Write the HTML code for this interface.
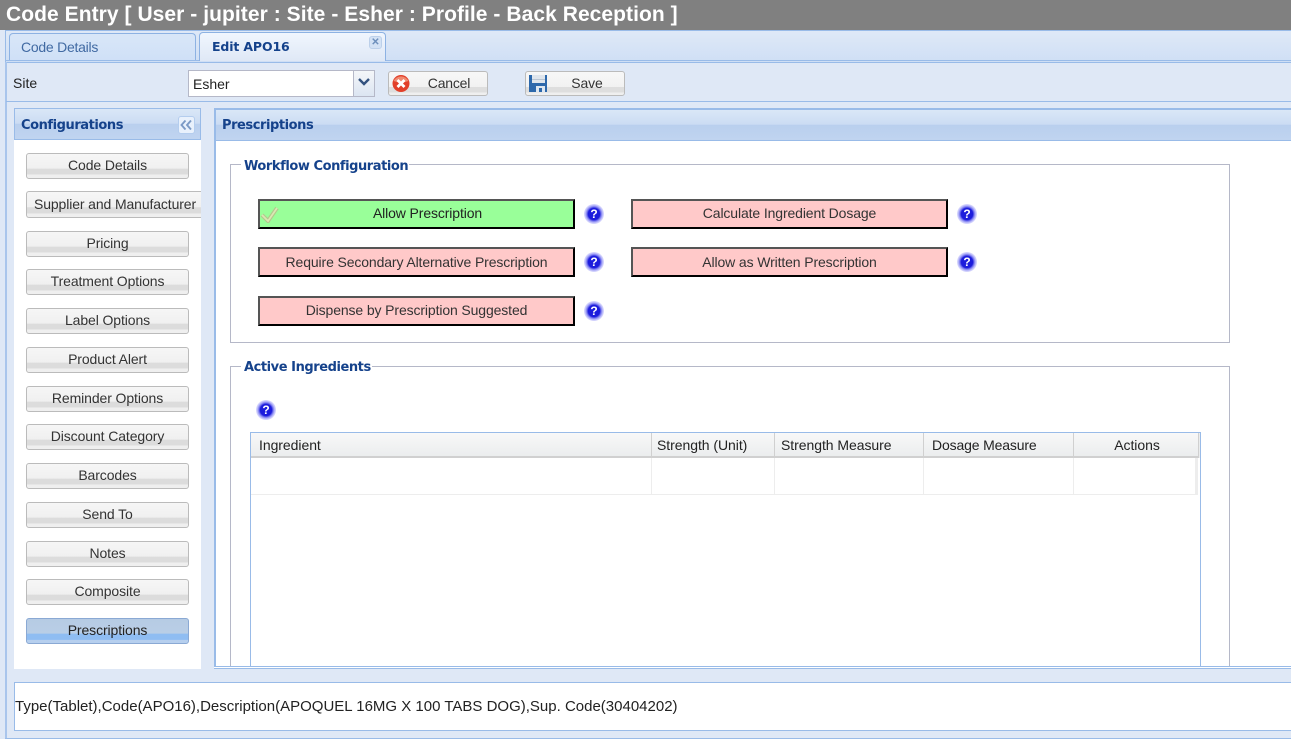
<!DOCTYPE html>
<html><head><meta charset="utf-8"><style>
html,body{margin:0;padding:0;width:1291px;height:739px;overflow:hidden;background:#dfe8f6;font-family:"Liberation Sans",sans-serif;font-size:14px;color:#333}
.a{position:absolute;box-sizing:border-box}
.b{font-family:"DejaVu Sans",sans-serif;font-weight:bold;color:#15428b;white-space:nowrap}
.h{font-size:13px;line-height:16px;letter-spacing:-.44px}
.nav{position:absolute;left:26px;width:163px;height:26px;box-sizing:border-box;border:1px solid #bbb;border-radius:3px;background:linear-gradient(#f6f6f6 0,#f0f0f0 60%,#dcdcdc 62%,#dcdcdc 85%,#efefef 86%);text-align:center;line-height:23px;color:#333;white-space:nowrap;letter-spacing:-.1px}
.tog{position:absolute;height:30px;box-sizing:border-box;width:317px;border:2px solid;border-color:#555 #000 #000 #555;text-align:center;line-height:25px;background:#ffc9c9;color:#333;letter-spacing:-.12px}
.q{position:absolute;width:20px;height:20px;border-radius:50%;background:radial-gradient(circle closest-side,#1c1cdc 0,#1c1cdc 58%,#7a7af0 72%,#c0c0fa 88%,#dcdcfd 100%);color:#fff;font:bold 12px/20px "Liberation Sans",sans-serif;text-align:center}
.bt{position:absolute;height:25px;box-sizing:border-box;border:1px solid #bbb;border-radius:3px;background:linear-gradient(#f7f7f7 0,#f2f2f2 64%,#dedede 66%,#dedede 88%,#efefef 90%);line-height:23px;text-align:center}
.th{position:absolute;top:433px;height:25px;box-sizing:border-box;line-height:24px;background:linear-gradient(#f8f8f8,#ebedee);border-right:1px solid #d0d0d0;border-bottom:2px solid #d0d0d0;padding-left:8px;color:#222;white-space:nowrap;letter-spacing:-.05px}
.td{position:absolute;top:458px;height:37px;box-sizing:border-box;border-right:1px solid #ededed;border-bottom:1px solid #ededed}
</style></head><body>
<div class="a" style="left:0;top:0;width:1291px;height:30px;background:#808080;color:#fff;font:bold 21px/30px 'Liberation Sans',sans-serif;padding-left:6px;white-space:nowrap;letter-spacing:.06px">Code Entry [ User - jupiter : Site - Esher : Profile - Back Reception ]</div>

<div class="a" style="left:5px;top:30px;width:1286px;height:33px;background:linear-gradient(#dfe9f7,#cfdff5);border-top:1px solid #99bbe8;border-left:1px solid #99bbe8;border-bottom:1px solid #99bbe8"></div>
<div class="a" style="left:5px;top:60px;width:1286px;height:1px;background:#99bbe8"></div>
<div class="a" style="left:9px;top:33px;width:187px;height:27px;border:1px solid #8db2e3;border-bottom:0;border-radius:4px 4px 0 0;background:linear-gradient(#d9e7f8,#cfe0f7);color:#416aa3;line-height:26px;padding-left:11px;letter-spacing:-.25px">Code Details</div>
<div class="a b" style="left:199px;top:32px;width:187px;height:29px;border:1px solid #8db2e3;border-bottom:0;border-radius:4px 4px 0 0;background:linear-gradient(#f0f6fe,#dfe8f6);line-height:28px;padding-left:12px;font-size:12.5px;letter-spacing:-.14px">Edit APO16</div>
<div class="a" style="left:369px;top:36px;width:13px;height:13px;border-radius:3px;background:#d3e2f5;border:1px solid #bcd0ea;color:#6d8fbc;font:bold 10px/11px 'Liberation Sans',sans-serif;text-align:center">✕</div>

<div class="a" style="left:5px;top:62px;width:2px;height:677px;background:#a9c5ec"></div>
<div class="a" style="left:6px;top:101px;width:1285px;height:1px;background:#99bbe8"></div>

<div class="a" style="left:13px;top:73px;color:#222;line-height:20px">Site</div>
<div class="a" style="left:188px;top:70px;width:187px;height:27px;border:1px solid #b5b8c8;background:#fff;line-height:26px;padding-left:4px;color:#222">Esher</div>
<div class="a" style="left:353px;top:71px;width:21px;height:25px;background:linear-gradient(#f4f6f9,#dce5f2);border-left:1px solid #b5b8c8"></div>
<svg class="a" style="left:358px;top:78px" width="12" height="8"><path d="M1 1L6 6L11 1" fill="none" stroke="#33527f" stroke-width="2.400"/></svg>

<div class="bt" style="left:388px;top:71px;width:100px;padding-left:22px;letter-spacing:-.2px">Cancel</div>
<svg class="a" style="left:391px;top:74px" width="20" height="19"><circle cx="10" cy="9.500" r="8.500" fill="#e2402a"/><path d="M2.500 7A8 7 0 0 1 17.500 7L10 9Z" fill="#f08a70"/><path d="M6.500 6L13.500 13M13.500 6L6.500 13" stroke="#fff" stroke-width="2.800"/></svg>
<div class="bt" style="left:525px;top:71px;width:100px;padding-left:24px;letter-spacing:-.1px">Save</div>
<svg class="a" style="left:529px;top:75px" width="19" height="18"><path d="M0 0H18V17H0Z" fill="#2d68ab"/><rect x="3" y="0" width="13" height="8" fill="#dfe5ec"/><rect x="3" y="4" width="13" height="1" fill="#b9c5d3"/><rect x="7" y="11" width="9" height="6" fill="#dde6f0"/><rect x="10" y="13" width="3" height="4" fill="#2d68ab"/></svg>

<div class="a" style="left:14px;top:108px;width:187px;height:32px;border:1px solid #99bbe8;background:linear-gradient(#dae7f7 0,#cbdcf3 48%,#b9cfee 50%,#c0d4f0 100%)"></div>
<div class="a b h" style="left:21px;top:118px">Configurations</div>
<div class="a" style="left:178px;top:116px;width:17px;height:18px;border-radius:3px;border:1px solid #b4cdee;background:#e9f1fc"></div>
<svg class="a" style="left:180px;top:120px" width="13" height="10"><path d="M5.500 .5L1.500 5L5.500 9.500M11 .5L7 5L11 9.500" fill="none" stroke="#7b9ac6" stroke-width="1.900"/></svg>
<div class="a" style="left:14px;top:140px;width:187px;height:529px;background:#fff"></div>

<div class="nav" style="top:153px">Code Details</div>
<div class="a" style="left:26px;top:191px;width:175px;height:27px;box-sizing:border-box;border:1px solid #bbb;border-right:0;border-radius:3px 0 0 3px;background:linear-gradient(#f6f6f6 0,#f0f0f0 60%,#dcdcdc 62%,#dcdcdc 85%,#efefef 86%);line-height:24px;padding-left:7px;color:#333;white-space:nowrap;overflow:hidden;letter-spacing:-.12px">Supplier and Manufacturer</div>
<div class="nav" style="top:231px">Pricing</div>
<div class="nav" style="top:269px">Treatment Options</div>
<div class="nav" style="top:308px">Label Options</div>
<div class="nav" style="top:347px">Product Alert</div>
<div class="nav" style="top:386px">Reminder Options</div>
<div class="nav" style="top:424px">Discount Category</div>
<div class="nav" style="top:463px">Barcodes</div>
<div class="nav" style="top:502px">Send To</div>
<div class="nav" style="top:541px">Notes</div>
<div class="nav" style="top:579px">Composite</div>
<div class="nav" style="top:618px;background:linear-gradient(#b6cbe4 0,#b9cee6 60%,#8fbdf2 62%,#8fbdf2 86%,#b6cfee 88%);border-color:#8aa9d4;color:#222">Prescriptions</div>

<div class="a" style="left:214px;top:108px;width:1077px;height:560px;border:2px solid #99bbe8;border-right:0;border-bottom:1px solid #99bbe8;background:#fff"></div>
<div class="a" style="left:216px;top:110px;width:1075px;height:31px;border-bottom:1px solid #99bbe8;background:linear-gradient(#dae7f7 0,#cbdcf3 48%,#b9cfee 50%,#c0d4f0 100%)"></div>
<div class="a b h" style="left:222px;top:118px">Prescriptions</div>

<div class="a" style="left:230px;top:164px;width:1000px;height:179px;border:1px solid #b5b8c8"></div>
<div class="a b h" style="left:241px;top:159px;padding:0 1px 0 3px;background:#fff;height:16px;line-height:16px;padding-top:0"><span style="position:relative;top:0">Workflow Configuration</span></div>
<div class="tog" style="left:258px;top:199px;background:#99ff99;color:#222;padding-left:22px">Allow Prescription</div>
<svg class="a" style="left:260px;top:204px" width="19" height="19"><path d="M2 11L8 17L17 4" fill="none" stroke="#b3c78c" stroke-width="4"/><path d="M2 11L8 17L17 4" fill="none" stroke="#dbe7b4" stroke-width="1.800"/></svg>
<div class="tog" style="left:631px;top:199px">Calculate Ingredient Dosage</div>
<div class="tog" style="left:258px;top:247px;line-height:27px">Require Secondary Alternative Prescription</div>
<div class="tog" style="left:631px;top:247px;line-height:27px">Allow as Written Prescription</div>
<div class="tog" style="left:258px;top:296px">Dispense by Prescription Suggested</div>
<div class="q" style="left:584px;top:204px">?</div>
<div class="q" style="left:957px;top:204px">?</div>
<div class="q" style="left:584px;top:252px">?</div>
<div class="q" style="left:957px;top:252px">?</div>
<div class="q" style="left:584px;top:301px">?</div>

<div class="a" style="left:230px;top:366px;width:1000px;height:302px;border:1px solid #b5b8c8;border-bottom:0"></div>
<div class="a b h" style="left:241px;top:360px;padding:0 1px 0 3px;background:#fff;height:16px;line-height:16px"><span style="position:relative;top:0">Active Ingredients</span></div>
<div class="q" style="left:256px;top:400px">?</div>

<div class="a" style="left:250px;top:432px;width:951px;height:236px;border:1px solid #99bbe8;border-bottom:0;background:#fff"></div>
<div class="th" style="left:251px;width:401px">Ingredient</div>
<div class="th" style="left:652px;width:123px;padding-left:5px">Strength (Unit)</div>
<div class="th" style="left:775px;width:149px;padding-left:6px">Strength Measure</div>
<div class="th" style="left:924px;width:150px;padding-left:8px;letter-spacing:-.15px">Dosage Measure</div>
<div class="th" style="left:1074px;width:125px;padding:0 0 0 2px;text-align:center">Actions</div>
<div class="a" style="left:1199px;top:433px;width:1px;height:25px;background:#ebedee"></div>
<div class="td" style="left:251px;width:401px"></div>
<div class="td" style="left:652px;width:123px"></div>
<div class="td" style="left:775px;width:149px"></div>
<div class="td" style="left:924px;width:150px"></div>
<div class="td" style="left:1074px;width:124px;border-right:3px solid #ededed"></div>

<div class="a" style="left:214px;top:666px;width:1077px;height:3px;border-top:1px solid #99bbe8;border-bottom:1px solid #99bbe8;background:#fff"></div>
<div class="a" style="left:14px;top:682px;width:1277px;height:49px;border:1px solid #99bbe8;border-right:0;background:#fff;line-height:47px;color:#222;white-space:nowrap;font-size:15px">Type(Tablet),Code(APO16),Description(APOQUEL 16MG X 100 TABS DOG),Sup. Code(30404202)</div>
<div class="a" style="left:5px;top:738px;width:1286px;height:1px;background:#99bbe8"></div>
</body></html>
